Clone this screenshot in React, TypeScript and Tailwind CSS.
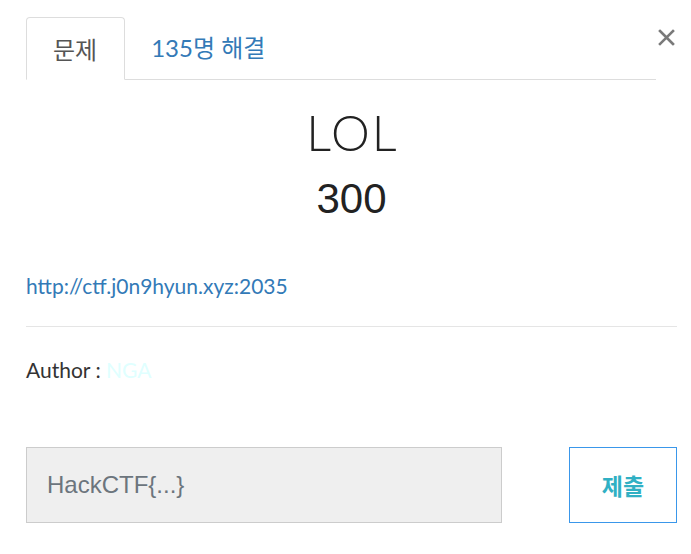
import React from "react";

export default function App() {
  return (
    <div className="w-[691px] h-[554px] bg-white pl-[26px] pr-[14px] pt-[17px] font-['Lato','Noto_Sans_CJK_KR',sans-serif] overflow-hidden">
      <div className="flex items-start">
        <div className="flex-1 flex border-b border-[#ddd] h-[63px]">
          <div className="h-[63px] pl-[26px] pr-[27px] border border-[#ddd] border-b-white rounded-t-[4px] flex items-center text-[24px] text-[#555] bg-white font-['Noto_Sans_CJK_KR',sans-serif]">
            문제
          </div>
          <div className="h-[62px] px-[26px] flex items-center text-[24px] text-[#337ab7] font-['Lato','Noto_Sans_CJK_KR',sans-serif]">
            135명 해결
          </div>
        </div>
        <button className="w-[21px] h-[21px] mt-[10px] pl-[2px] flex items-center justify-start" aria-label="close">
          <svg width="17" height="17" viewBox="0 0 17 17">
            <path d="M2 2 L15 15 M15 2 L2 15" stroke="#7a7a7a" strokeWidth="2.6" strokeLinecap="square" />
          </svg>
        </button>
      </div>

      <div className="mt-[27px] h-[50px] leading-[50px] text-center text-[49px] font-light text-[#222] tracking-[2px] pl-[2px] font-['Lato',sans-serif]">
        LOL
      </div>
      <div className="mt-[18px] h-[48px] leading-[48px] text-center text-[42px] text-[#222] font-['Liberation_Sans',Arial,sans-serif]">
        300
      </div>

      <div className="mt-[51px] h-[24px] leading-[24px] text-[21px] text-[#337ab7]">
        http://ctf.j0n9hyun.xyz:2035
      </div>
      <div className="mt-[28px] border-t border-[#e5e5e5]" />
      <div className="mt-[31px] h-[24px] leading-[24px] text-[21px] text-[#333]">
        Author : <span className="text-[#e0ffff]">NGA</span>
      </div>

      <div className="mt-[65px] flex justify-between">
        <div className="w-[476px] h-[76px] bg-[#efefef] border border-[#ccc] flex items-center pl-[20px] text-[24px] text-[#6c757d] font-['Liberation_Sans',Arial,sans-serif]">
          HackCTF{"{...}"}
        </div>
        <div className="w-[108px] h-[76px] border border-[#3a97ea] flex items-center justify-center text-[23px] font-bold text-[#30b0c4] font-['Noto_Sans_CJK_KR',sans-serif]">
          제출
        </div>
      </div>
    </div>
  );
}
